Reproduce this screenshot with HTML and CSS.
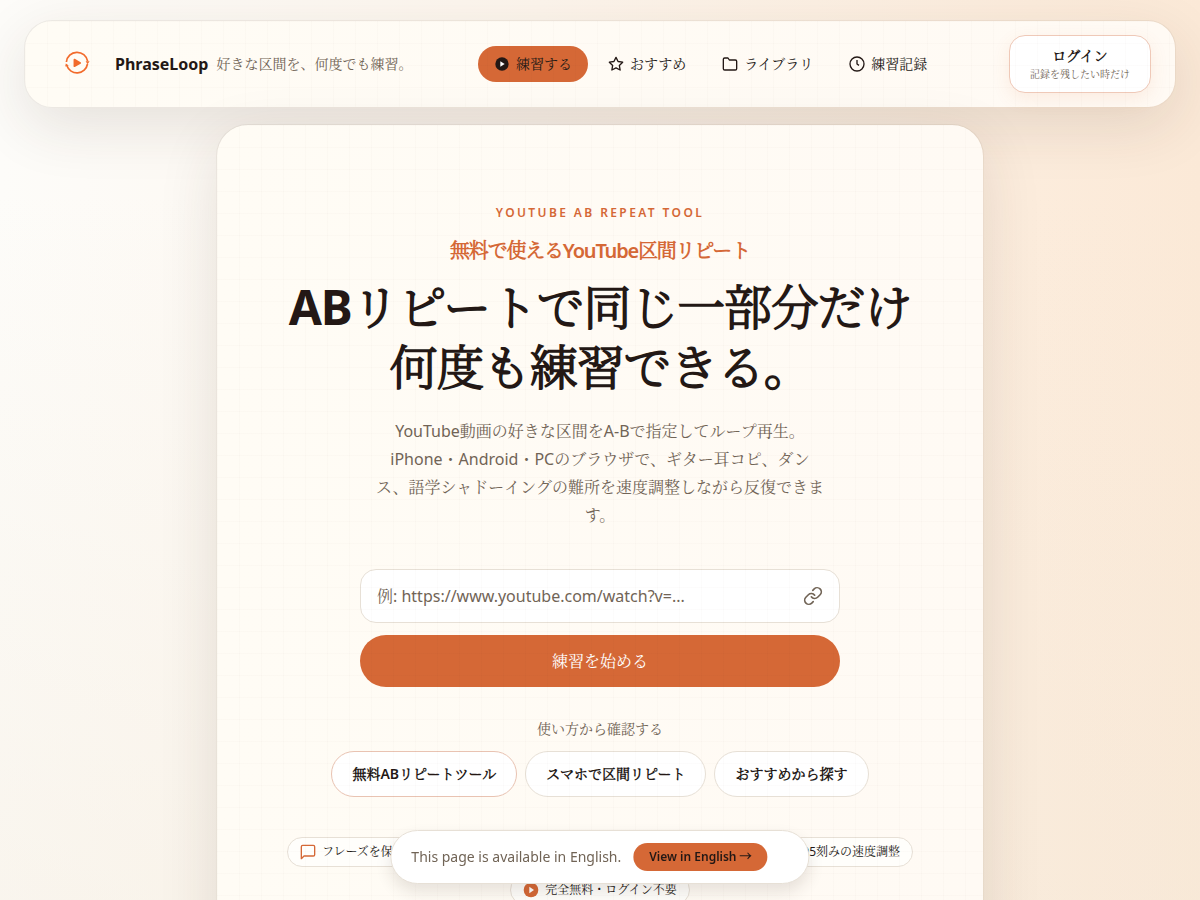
FILE: index.html
```
<!DOCTYPE html>
<html lang="ja">
<head>
  <meta charset="UTF-8">
  <meta name="viewport" content="width=device-width, initial-scale=1.0">
  <title>PhraseLoop</title>
  <link rel="stylesheet" href="styles.css">
</head>
<body>
  <header class="site-header paper">
    <a class="brand" href="#">
      <svg class="brand-logo" viewBox="0 0 28 28" fill="none" stroke="#f26b2c" stroke-width="1.7">
        <path d="M3.4 12A10.7 10.7 0 0 1 24.6 11.2M24.5 14A10.7 10.7 0 0 1 3.8 15.6"/>
        <path d="M22.6 11.2h4l-2 3zM2.2 16.6l.6-3 3 2z" fill="#f26b2c" stroke="none"/>
        <path d="M11.4 9.6v6.6l5.8-3.3z" fill="#f26b2c" stroke-linejoin="round"/>
      </svg>
      <strong class="brand-name">PhraseLoop</strong>
      <span class="brand-tagline">好きな区間を、何度でも練習。</span>
    </a>
    <nav class="main-nav">
      <a class="nav-link active" href="#">
        <svg class="icon" viewBox="0 0 24 24"><circle cx="12" cy="12" r="10" fill="#231815"/><path d="M9.5 7.8v8.4l6.5-4.2z" fill="#fff"/></svg>
        練習する
      </a>
      <a class="nav-link" href="#">
        <svg class="icon line" viewBox="0 0 24 24"><path d="M12 2l3.1 6.3 6.9 1-5 4.9 1.2 6.8-6.2-3.2L5.8 21 7 14.2 2 9.3l6.9-1z"/></svg>
        おすすめ
      </a>
      <a class="nav-link" href="#">
        <svg class="icon line" viewBox="0 0 24 24"><path d="M22 19a2 2 0 0 1-2 2H4a2 2 0 0 1-2-2V5a2 2 0 0 1 2-2h5l2 3h9a2 2 0 0 1 2 2z"/></svg>
        ライブラリ
      </a>
      <a class="nav-link" href="#">
        <svg class="icon line" viewBox="0 0 24 24"><circle cx="12" cy="12" r="10.5"/><path d="M12 6v6l3 2"/></svg>
        練習記録
      </a>
    </nav>
    <button class="login" type="button">
      <span class="login-title">ログイン</span>
      <span class="login-note">記録を残したい時だけ</span>
    </button>
  </header>

  <main class="hero paper">
    <p class="eyebrow">YOUTUBE AB REPEAT TOOL</p>
    <h1 class="title">
      <span class="title-lead">無料で使えるYouTube区間リピート</span>
      ABリピートで同じ一部分だけ<br>何度も練習できる。
    </h1>
    <p class="description">YouTube動画の好きな区間をA-Bで指定してループ再生。iPhone・Android・PCのブラウザで、ギター耳コピ、ダンス、語学シャドーイングの難所を速度調整しながら反復できます。</p>

    <form class="video-form">
      <div class="url-field">
        <input type="url" aria-label="YouTube URL" placeholder="例: https://www.youtube.com/watch?v=...">
        <svg class="link-icon" viewBox="0 0 24 24"><path d="M10 13a5 5 0 0 0 7.54.54l3-3a5 5 0 0 0-7.07-7.07l-1.72 1.71"/><path d="M14 11a5 5 0 0 0-7.54-.54l-3 3a5 5 0 0 0 7.07 7.07l1.71-1.71"/></svg>
      </div>
      <button class="start" type="submit">練習を始める</button>
    </form>

    <p class="guide-label">使い方から確認する</p>
    <div class="guides">
      <a class="guide primary" href="#">無料ABリピートツール</a>
      <a class="guide" href="#">スマホで区間リピート</a>
      <a class="guide" href="#">おすすめから探す</a>
    </div>

    <ul class="features">
      <li>
        <svg class="icon line" viewBox="0 0 24 24"><path d="M2 22V4a2 2 0 0 1 2-2h16a2 2 0 0 1 2 2v12a2 2 0 0 1-2 2H6z"/></svg>
        フレーズを保存して何度も復習
      </li>
      <li>
        <svg class="icon line" viewBox="0 0 24 24"><circle cx="12" cy="12" r="10"/><path d="M12 6v6l3 2"/></svg>
        区間をワンタップで何度もリピート
      </li>
      <li>
        <svg class="icon line" viewBox="0 0 24 24"><path d="M3 18a10 10 0 1 1 18 0M12 14l4-5"/></svg>
        0.05刻みの速度調整
      </li>
      <li>
        <svg class="icon" viewBox="0 0 24 24"><circle cx="12" cy="12" r="11" fill="#d56836"/><path d="M9.5 7v10l7-5z" fill="#fff"/></svg>
        完全無料・ログイン不要
      </li>
    </ul>
  </main>

  <aside class="toast">
    <span>This page is available in English.</span>
    <a class="toast-link" href="#">View in English →</a>
  </aside>
</body>
</html>
```
FILE: styles.css
```
:root {
  --accent: #d56836;
  --ink: #231815;
  --muted: #716456;
  --line: #e7e0d6;
}
* {
  box-sizing: border-box;
}
body {
  margin: 0;
  min-height: 100vh;
  padding: 20px 24px 0;
  overflow-x: hidden;
  font-family: "Noto Sans", "Noto Serif CJK JP", "Noto Sans CJK JP", sans-serif;
  font-size: 14px;
  line-height: 20px;
  color: var(--ink);
  background:
    linear-gradient(180deg, transparent 20%, rgba(242, 232, 216, 0.4) 1000px),
    linear-gradient(90deg, #fdfcf9 0%, #fdf5ec 45%, #fcecdc 86%, #fbe9d7 100%);
}
a {
  color: inherit;
  text-decoration: none;
}
button, input {
  font: inherit;
  color: inherit;
}
.paper {
  position: relative;
  border: 1px solid rgba(90, 70, 50, 0.1);
  background: linear-gradient(90deg, #fffcf5, #fffaf4);
  background-clip: padding-box;
  box-shadow: 0 18px 60px rgba(60, 45, 30, 0.12);
}
/* fine grid laid over the whole sheet */
.paper::after {
  content: "";
  position: absolute;
  inset: 0;
  border-radius: inherit;
  pointer-events: none;
  background-image:
    linear-gradient(rgba(90, 60, 30, 0.015) 1px, transparent 1px),
    linear-gradient(90deg, rgba(90, 60, 30, 0.015) 1px, transparent 1px);
  background-size: 22px 22px;
}
.icon {
  width: 16px;
  height: 16px;
  flex: none;
}
.line {
  fill: none;
  stroke: currentColor;
  stroke-width: 2;
  stroke-linejoin: round;
}

/* header */
.site-header {
  display: flex;
  align-items: center;
  justify-content: space-between;
  min-height: 88px;
  padding: 14px 24px 14px 38px;
  border-radius: 28px;
}
.brand {
  display: flex;
  align-items: center;
}
.brand-logo {
  width: 28px;
  height: 28px;
  margin-right: 24px;
}
.brand-name {
  font-size: 16px;
  margin-right: 8px;
}
.brand-tagline {
  color: var(--muted);
}
.main-nav {
  display: flex;
  gap: 4px;
}
.nav-link {
  display: flex;
  align-items: center;
  gap: 6px;
  padding: 8px 16px;
  border-radius: 18px;
}
.nav-link.active {
  background: var(--accent);
}
.login {
  display: flex;
  flex-direction: column;
  align-items: center;
  padding: 10px 20px;
  border: 1px solid #efc9b8;
  border-radius: 16px;
  background: #fff;
  box-shadow: 0 6px 18px rgba(213, 104, 54, 0.1);
}
.login-title {
  font-weight: 700;
}
.login-note {
  font-size: 10px;
  line-height: 16px;
  color: var(--muted);
}

/* hero */
.hero {
  display: flex;
  flex-direction: column;
  align-items: center;
  max-width: 768px;
  margin: 16px auto 0;
  padding: 78px 48px 64px;
  border-radius: 32px;
  text-align: center;
}
.eyebrow {
  margin: 0;
  font-size: 12px;
  font-weight: 600;
  letter-spacing: 0.2em;
  color: var(--accent);
}
.login-title,
.title,
.guide,
.toast-link {
  font-family: "Noto Sans", "Noto Serif CJK JP Light", "Noto Serif CJK JP", "Noto Sans CJK JP", sans-serif;
}
.title {
  margin: 12px 0 0;
  font-size: 48px;
  line-height: 60px;
  font-weight: 700;
  letter-spacing: -0.025em;
}
.title-lead {
  display: block;
  margin-bottom: 10px;
  font-size: 20px;
  line-height: 32px;
  font-weight: 600;
  color: var(--accent);
}
.description {
  max-width: 448px;
  margin: 20px 0 0;
  font-size: 16px;
  line-height: 28px;
  color: var(--muted);
}
.video-form {
  display: flex;
  flex-direction: column;
  gap: 12px;
  width: 100%;
  max-width: 480px;
  margin-top: 40px;
  font-size: 16px;
}
.url-field {
  display: flex;
  align-items: center;
  height: 54px;
  padding: 0 16px;
  border: 1px solid var(--line);
  border-radius: 16px;
  background: #fff;
}
.url-field input {
  flex: 1;
  min-width: 0;
  padding: 0;
  border: 0;
  outline: 0;
  background: none;
}
.url-field input::placeholder {
  color: var(--muted);
  opacity: 1;
}
.link-icon {
  width: 20px;
  height: 20px;
  fill: none;
  stroke: var(--muted);
  stroke-width: 2;
  stroke-linecap: round;
}
.start {
  height: 52px;
  border: 0;
  border-radius: 26px;
  color: #fff;
  background: var(--accent);
}
.guide-label {
  margin: 32px 0 12px;
  color: var(--muted);
}
.guides {
  display: flex;
  flex-wrap: wrap;
  justify-content: center;
  gap: 8px;
}
.guide {
  padding: 12px 20px;
  border: 1px solid var(--line);
  border-radius: 23px;
  font-weight: 600;
  background: #fff;
}
.guide.primary {
  border-color: #e9c3b2;
}
.features {
  display: flex;
  flex-wrap: wrap;
  justify-content: center;
  gap: 8px;
  margin: 40px 0 0;
  padding: 0;
  list-style: none;
  font-size: 12px;
}
.features li {
  display: flex;
  align-items: center;
  gap: 6px;
  height: 30px;
  padding: 0 12px;
  border: 1px solid var(--line);
  border-radius: 15px;
  background: #fffefb;
}
.features .line {
  color: var(--accent);
}

/* language notice */
.toast {
  position: fixed;
  left: 50%;
  bottom: 16px;
  transform: translateX(-50%);
  display: flex;
  align-items: center;
  gap: 12px;
  height: 54px;
  padding: 0 41px 0 20px;
  border: 1px solid var(--line);
  border-radius: 27px;
  white-space: nowrap;
  color: var(--muted);
  background: #fff;
  box-shadow: 0 8px 16px rgba(60, 45, 30, 0.12);
}
.toast-link {
  padding: 4px 16px;
  border-radius: 14px;
  font-size: 12px;
  font-weight: 600;
  color: var(--ink);
  background: var(--accent);
}
```
